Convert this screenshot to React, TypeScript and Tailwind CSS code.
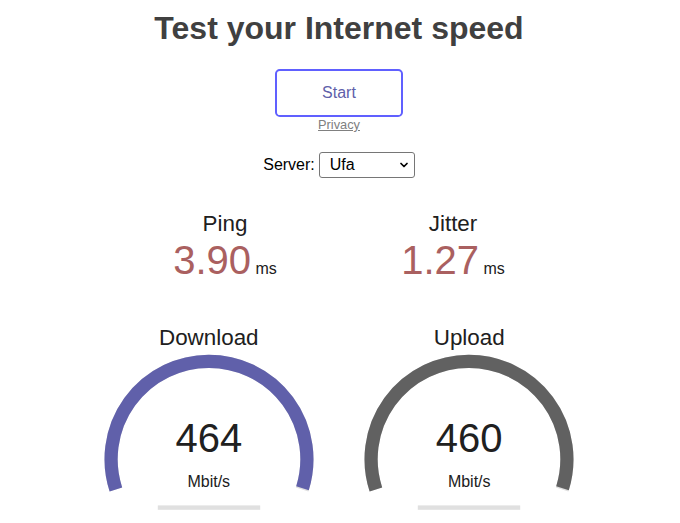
import { ChevronDown } from 'lucide-react';

const CX = 128;
const CY = 136.2;
const R = 97.9;
const SW = 13.2;

function arcPath(from: number, to: number) {
  const x1 = CX + R * Math.cos(from);
  const y1 = CY + R * Math.sin(from);
  const x2 = CX + R * Math.cos(to);
  const y2 = CY + R * Math.sin(to);
  const large = to - from > Math.PI ? 1 : 0;
  return `M ${x1} ${y1} A ${R} ${R} 0 ${large} 1 ${x2} ${y2}`;
}

function toAmount(mbps: number) {
  return 1 - 1 / Math.pow(1.3, Math.sqrt(mbps));
}

function Gauge({ name, value, color }: { name: string; value: number; color: string }) {
  const start = -Math.PI * 1.1;
  const end = toAmount(value) * Math.PI * 1.2 - Math.PI * 1.1;
  return (
    <div className="relative w-[256px] h-[200px] text-center">
      <svg className="absolute inset-0" width="256" height="200" viewBox="0 0 256 200">
        <path d={arcPath(start, Math.PI * 0.1)} fill="none" stroke="#E0E0E0" strokeWidth={SW} />
        <path d={arcPath(start, end)} fill="none" stroke={color} strokeWidth={SW} />
        <rect x={76.8} y={182.4} width={102.4} height={4.4} fill="#E0E0E0" />
      </svg>
      <div className="absolute top-[2.24px] left-0 w-full text-[22.4px] leading-[26px]">{name}</div>
      <div className="absolute bottom-[62px] left-0 w-full text-[40px] leading-[46px]">{value}</div>
      <div className="absolute bottom-[32px] left-0 w-full text-[16px] leading-[18px]">Mbit/s</div>
    </div>
  );
}

function Small({ name, value }: { name: string; value: string }) {
  return (
    <div className="w-[224px] h-[112px] text-center">
      <div className="text-[22.4px] leading-[26px]">{name}</div>
      <div className="flex items-baseline justify-center gap-[4.45px]">
        <span className="text-[40px] leading-[46px] text-[#AA6060]">{value}</span>
        <span className="text-[16px] leading-[18px]">ms</span>
      </div>
    </div>
  );
}

export default function App() {
  return (
    <div className="w-[678px] h-[523px] overflow-hidden bg-white text-[#202020] font-['Liberation_Sans',Arial,sans-serif] flex flex-col items-center">
      <h1 className="mt-[10px] text-[32px] leading-[37px] font-bold text-[#404040]">Test your Internet speed</h1>

      <div className="mt-[22px] w-[128px] h-[48px] border-[2.4px] border-[#6060FF] rounded-[4.8px] text-[#6060AA] text-[16px] leading-[43px] text-center">
        Start
      </div>
      <a href="#" className="text-[12.8px] leading-[15px] text-[#808080] underline">Privacy</a>

      <div className="mt-[20px] flex items-center gap-[4px] text-[16px] text-black">
        <span>Server:</span>
        <div className="relative">
          <select className="appearance-none w-[96px] h-[26px] pl-[10px] border border-[#767676] rounded-[3px] bg-white text-black text-[16px] leading-[24px]">
            <option>Ufa</option>
          </select>
          <ChevronDown className="absolute right-[5px] top-[7px] w-[12px] h-[12px] pointer-events-none text-black" strokeWidth={3.5} />
        </div>
      </div>

      <div className="mt-[33px] flex gap-[4px]">
        <Small name="Ping" value="3.90" />
        <Small name="Jitter" value="1.27" />
      </div>

      <div className="flex gap-[4.45px]">
        <Gauge name="Download" value={464} color="#6060AA" />
        <Gauge name="Upload" value={460} color="#616161" />
      </div>
    </div>
  );
}
